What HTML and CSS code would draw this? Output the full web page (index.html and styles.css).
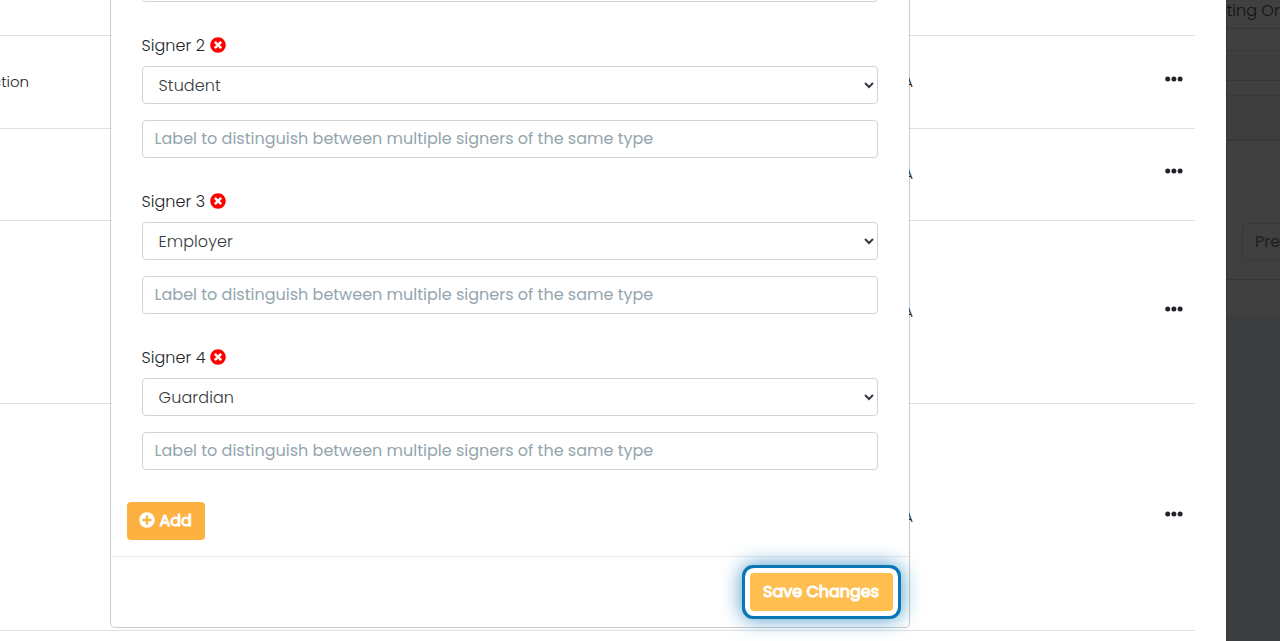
FILE: index.html
```
<!DOCTYPE html>
<html lang="en">
<head>
    <meta charset="utf-8">
    <title>Edit Signers</title>
    <link rel="stylesheet" href="styles.css">
</head>
<body>
<svg class="sprite">
    <symbol id="times-circle" viewBox="0 0 512 512">
        <path d="M256 8C119 8 8 119 8 256s111 248 248 248 248-111 248-248S393 8 256 8zm121.600 313.100c4.700 4.700 4.700 12.300 0 17L338 377.600c-4.700 4.700-12.300 4.700-17 0L256 312l-65.100 65.600c-4.700 4.700-12.300 4.700-17 0L134.400 338c-4.700-4.700-4.700-12.300 0-17l65.600-65-65.600-65.100c-4.700-4.700-4.700-12.300 0-17l39.600-39.600c4.700-4.700 12.300-4.700 17 0l65 65.700 65.100-65.600c4.700-4.700 12.300-4.700 17 0l39.600 39.600c4.700 4.700 4.700 12.300 0 17L312 256l65.600 65.100z"/>
    </symbol>
    <symbol id="plus-circle" viewBox="0 0 512 512">
        <path d="M256 8C119 8 8 119 8 256s111 248 248 248 248-111 248-248S393 8 256 8zm144 276c0 6.600-5.400 12-12 12h-92v92c0 6.600-5.400 12-12 12h-56c-6.600 0-12-5.400-12-12v-92h-92c-6.600 0-12-5.400-12-12v-56c0-6.600 5.400-12 12-12h92v-92c0-6.600 5.400-12 12-12h56c6.600 0 12 5.400 12 12v92h92c6.600 0 12 5.400 12 12v56z"/>
    </symbol>
    <symbol id="ellipsis" viewBox="0 0 18 6">
        <circle cx="2.700" cy="3" r="2.500"/>
        <circle cx="8.900" cy="3" r="2.500"/>
        <circle cx="15.100" cy="3" r="2.500"/>
    </symbol>
</svg>

<div class="screen">
    <div class="panel">
        <div class="row row-first"></div>
        <div class="row row-short">
            <span class="name">ction</span>
            <span class="status">N/A</span>
            <svg class="menu"><use href="#ellipsis"/></svg>
        </div>
        <div class="row row-mid">
            <span class="name"></span>
            <span class="status">N/A</span>
            <svg class="menu"><use href="#ellipsis"/></svg>
        </div>
        <div class="row row-tall">
            <span class="name"></span>
            <span class="status">N/A</span>
            <svg class="menu"><use href="#ellipsis"/></svg>
        </div>
        <div class="row row-taller">
            <span class="name"></span>
            <span class="status">N/A</span>
            <svg class="menu"><use href="#ellipsis"/></svg>
        </div>
    </div>

    <div class="backdrop">
        <div class="bg-title">iting Or</div>
        <div class="bg-gap"></div>
        <div class="bg-line"></div>
        <div class="bg-space"></div>
        <div class="bg-head"></div>
        <div class="bg-body"><div class="bg-button">Pre</div></div>
        <div class="bg-foot"></div>
    </div>
</div>

<div class="modal">
    <div class="modal-body">
        <input class="control control-cut" type="text">

        <div class="signer">
            <div class="label">Signer 2 <svg class="icon remove"><use href="#times-circle"/></svg></div>
            <select class="control"><option>Student</option></select>
            <input class="control" type="text" placeholder="Label to distinguish between multiple signers of the same type">
        </div>
        <div class="signer">
            <div class="label">Signer 3 <svg class="icon remove"><use href="#times-circle"/></svg></div>
            <select class="control"><option>Employer</option></select>
            <input class="control" type="text" placeholder="Label to distinguish between multiple signers of the same type">
        </div>
        <div class="signer">
            <div class="label">Signer 4 <svg class="icon remove"><use href="#times-circle"/></svg></div>
            <select class="control"><option>Guardian</option></select>
            <input class="control" type="text" placeholder="Label to distinguish between multiple signers of the same type">
        </div>

        <button class="btn add" type="button"><svg class="icon"><use href="#plus-circle"/></svg><span>Add</span></button>
    </div>
    <div class="modal-footer">
        <button class="btn save" type="button">Save Changes</button>
    </div>
</div>
</body>
</html>
```

FILE: styles.css
```
* {
    box-sizing: border-box;
}

body {
    margin: 0;
    height: 641px;
    overflow: hidden;
    position: relative;
    background: #fff;
    color: #212529;
    font-family: Poppins, Inter, "Open Sans", sans-serif;
    font-size: 16px;
    font-weight: 300;
    line-height: 24px;
}

.sprite {
    display: none;
}

.screen {
    display: flex;
    height: 641px;
}

/* table behind the dialog */
.panel {
    width: 1226px;
    padding-right: 31px;
    background: #fff;
}

.row {
    display: flex;
    align-items: center;
    border-bottom: 1px solid #dee2e6;
    font-size: 15px;
}

.row-first {
    height: 36px;
}

.row-short {
    height: 93px;
}

.row-mid {
    height: 92px;
}

.row-tall {
    height: 183px;
}

.row-taller {
    height: 227px;
}

.name {
    width: 800px;
    text-indent: -8px;
}

.status {
    width: 113px;
    text-align: right;
}

.row-mid .status {
    margin-top: -1px;
}

.menu {
    width: 18px;
    height: 6px;
    margin: 0 12px 5.500px auto;
    fill: #212529;
}

.row-mid .menu {
    margin-bottom: 6.500px;
}

/* dimmed page on the right */
.backdrop {
    flex: 1;
    display: flex;
    flex-direction: column;
    overflow: hidden;
    background: #3c3d3e;
    border-left: 1px solid #343434;
    color: #111314;
    white-space: nowrap;
}

.backdrop div {
    flex-shrink: 0;
}

.bg-title {
    height: 29px;
    line-height: 21px;
    text-indent: -4px;
    background: #404040;
    border-bottom: 1px solid #363738;
}

.bg-gap {
    height: 22px;
    background: #404040;
    border-bottom: 1px solid #363738;
}

.bg-line {
    height: 30px;
    background: #3f3f3f;
    border-bottom: 1px solid #363738;
}

.bg-space {
    height: 15px;
    background: #404040;
    border-bottom: 1px solid #393939;
}

.bg-head {
    height: 45px;
    background: #3e3e3e;
    border-bottom: 2px solid #383838;
}

.bg-body {
    height: 139px;
    padding: 82px 0 0 15px;
    background: #404040;
    border-bottom: 1px solid #353637;
}

.bg-button {
    width: 96px;
    height: 38px;
    padding: 6px 12px;
    border: 1px solid #383939;
    border-radius: 4px;
    color: #1c1f21;
    font-weight: 400;
}

.bg-foot {
    height: 37px;
    background: #404040;
    border-bottom: 1px solid #393a3b;
}

.modal {
    display: flex;
    flex-direction: column;
    position: absolute;
    top: 0;
    left: 109.6px;
    width: 800px;
    height: 628px;
    background: #fff;
    background-clip: padding-box;
    border: 1px solid rgba(0, 0, 0, 0.2);
    border-top: 0;
    border-radius: 0 0 5px 5px;
}

.modal-body {
    display: flow-root;
    height: 556px;
    padding: 0 31px;
}

.control {
    display: block;
    width: 100%;
    height: 38px;
    padding: 6px 12px;
    background: #fff;
    border: 1px solid #ced4da;
    border-radius: 4px;
    color: #343a40;
    font: inherit;
}

select.control {
    letter-spacing: 0.1px;
}

input.control {
    padding: 5px 12px 7px;
}

.control::placeholder {
    color: #94a5ae;
    opacity: 1;
    font-weight: 400;
}

.control-cut {
    margin-top: -36px;
}

.signer {
    padding-top: 32px;
}

.signer .control + .control {
    margin-top: 16px;
}

.label {
    height: 24px;
    margin-bottom: 8px;
    display: flex;
    align-items: center;
    gap: 4.600px;
    letter-spacing: 0.05px;
}

.icon {
    width: 16px;
    height: 16px;
    fill: currentColor;
}

.remove {
    color: #f00;
    margin-top: -2px;
}

.btn {
    height: 38px;
    padding: 0;
    border: 0;
    border-radius: 4px;
    background: #fdb141;
    color: #fff;
    font: inherit;
    font-weight: 400;
    -webkit-text-stroke: 1px #fff;
}

.add {
    display: flex;
    align-items: center;
    justify-content: center;
    gap: 4px;
    width: 78px;
    margin: 32px 0 0 -15px;
}

.add .icon {
    margin-top: -2px;
}

.modal-footer {
    display: flex;
    justify-content: flex-end;
    height: 71px;
    padding: 16px 16px 0 0;
    border-top: 1px solid #e9ecef;
}

.save {
    width: 143px;
    background: #ffbe50;
    box-shadow: 0 0 0 5px #fff, 0 0 0 8px #0b76b5, 0 0 20px 8px rgba(11, 118, 181, 0.75);
}
```
